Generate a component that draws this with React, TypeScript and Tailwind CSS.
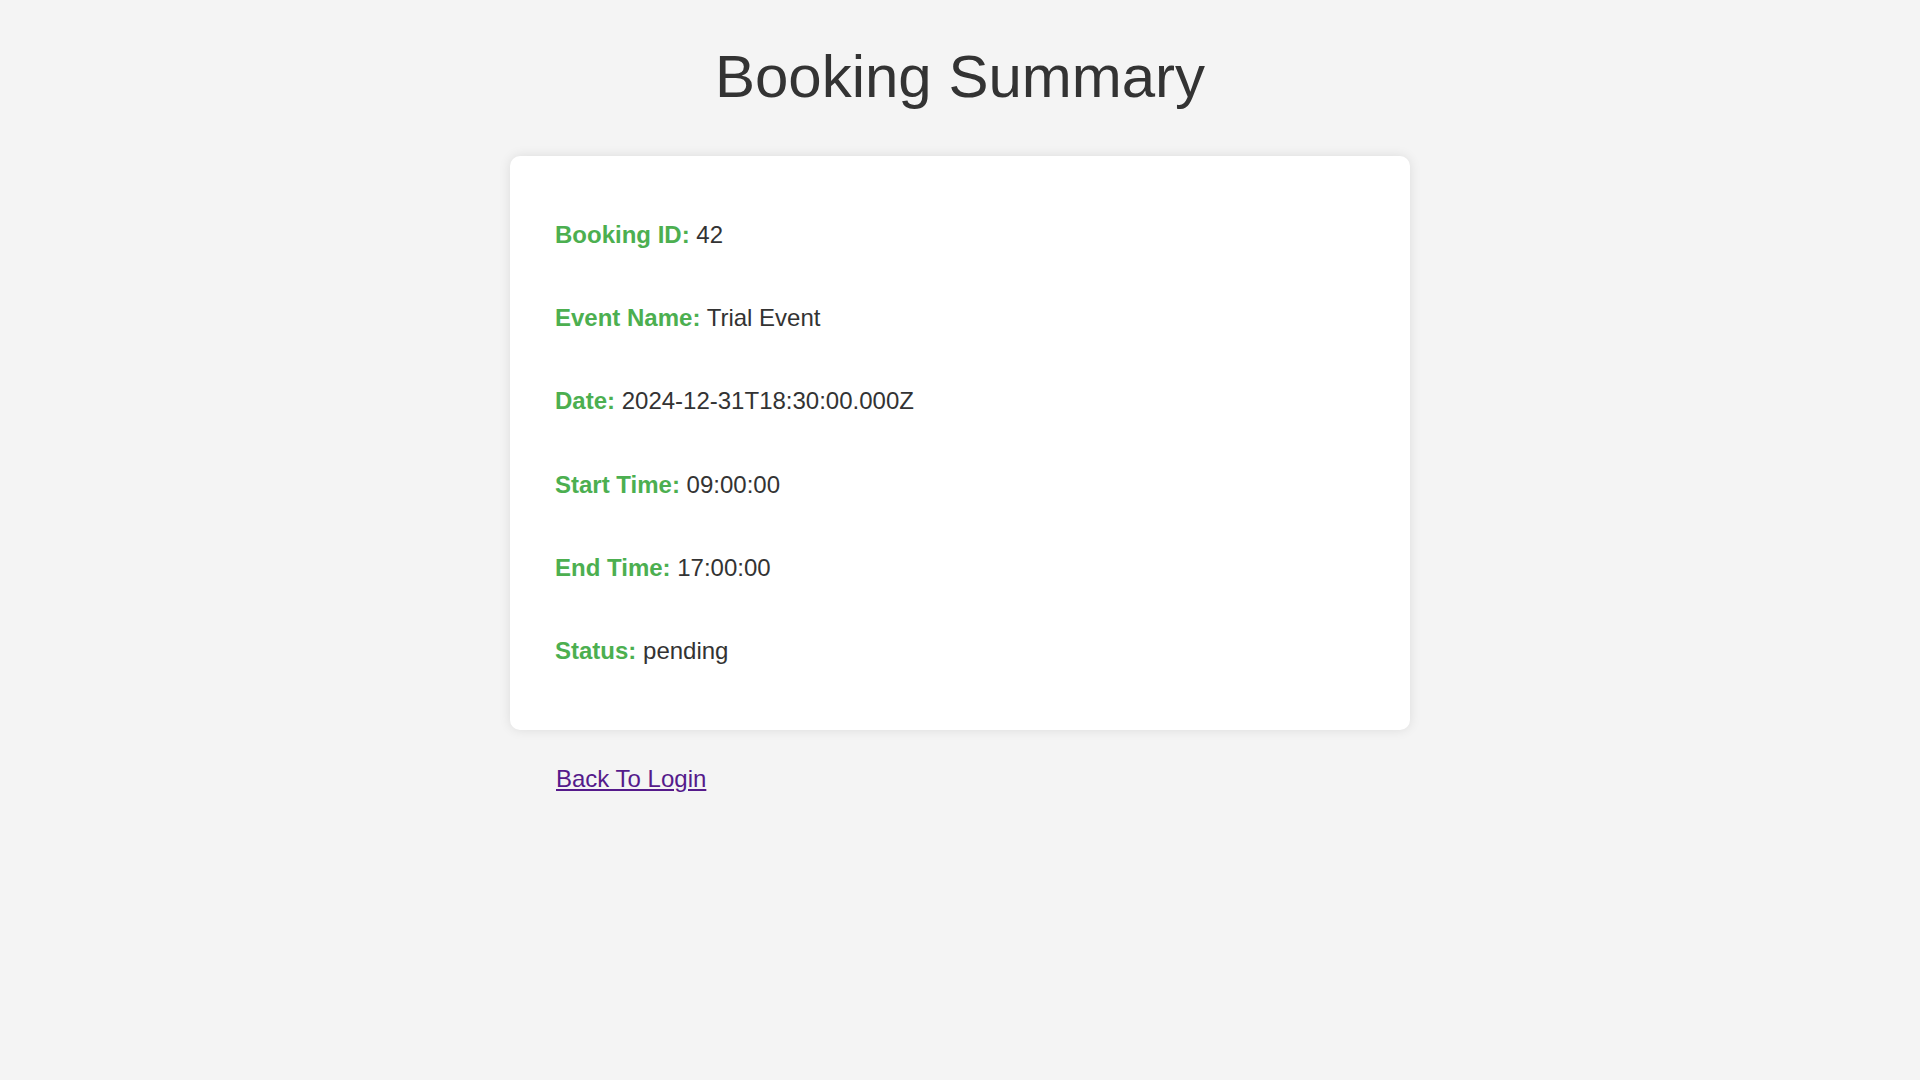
const booking = {
  id: 42,
  eventName: "Trial Event",
  date: "2024-12-31T18:30:00.000Z",
  startTime: "09:00:00",
  endTime: "17:00:00",
  status: "pending",
};

function Row({ label, value }: { label: string; value: string | number }) {
  return (
    <p className="h-[28px] text-[24px] leading-[28px] text-[#333333]">
      <span className="font-bold text-[#4caf50]">{label}:</span> {value}
    </p>
  );
}

export default function App() {
  return (
    <div className="min-h-screen bg-[#f4f4f4] font-['Liberation_Sans',Arial,sans-serif]">
      <div className="mx-auto flex w-[900px] flex-col pt-[47px]">
        <h1 className="text-center text-[60px] leading-none text-[#333333]">Booking Summary</h1>

        <div className="mt-[49px] flex flex-col gap-[55.2px] rounded-[10px] bg-white px-[45px] pt-[65px] pb-[65px] shadow-[0_0_12px_rgba(0,0,0,0.1)]">
          <Row label="Booking ID" value={booking.id} />
          <Row label="Event Name" value={booking.eventName} />
          <Row label="Date" value={booking.date} />
          <Row label="Start Time" value={booking.startTime} />
          <Row label="End Time" value={booking.endTime} />
          <Row label="Status" value={booking.status} />
        </div>

        <div className="mt-[35px] pl-[46px]">
          <a href="#" className="text-[24px] leading-[28px] text-[#551a8b] underline">
            Back To Login
          </a>
        </div>
      </div>
    </div>
  );
}
